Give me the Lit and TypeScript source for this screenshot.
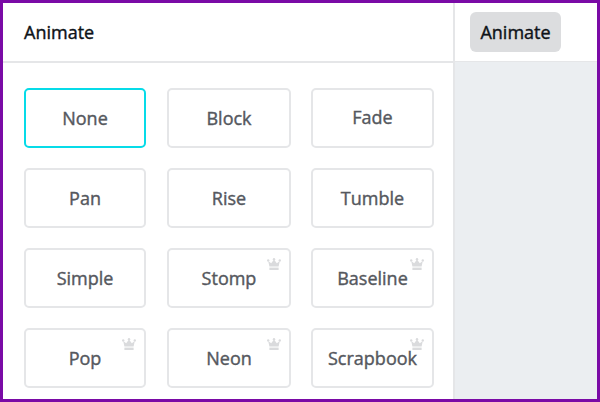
import { LitElement, html, css, svg } from "lit";
import { customElement } from "lit/decorators.js";

const items: [string, boolean, boolean, boolean][] = [
  ["None", false, true, false],
  ["Block", false, false, false],
  ["Fade", false, false, true],
  ["Pan", false, false, false],
  ["Rise", false, false, false],
  ["Tumble", false, false, false],
  ["Simple", false, false, false],
  ["Stomp", true, false, false],
  ["Baseline", true, false, false],
  ["Pop", true, false, false],
  ["Neon", true, false, false],
  ["Scrapbook", true, false, false],
];

const crown = svg`<svg class="crown" viewBox="0 0 14 12" width="14" height="12" aria-hidden="true">
  <circle cx="1.2" cy="2.4" r="1.2"/><circle cx="7" cy="1.2" r="1.2"/><circle cx="12.8" cy="2.4" r="1.2"/>
  <path d="M1.2 3 L4.2 5.2 L7 1.6 L9.8 5.2 L12.8 3 L11.6 8.4 H2.4 Z"/>
  <rect x="2.4" y="9.6" width="9.2" height="2.4"/>
</svg>`;

@customElement("app-root")
export class AppRoot extends LitElement {
  static styles = css`
    :host {
      display: block;
      width: 600px;
      height: 402px;
      box-sizing: border-box;
      border: 3px solid #7a0aa6;
      background: #fff;
      font-family: "Open Sans", sans-serif;
      overflow: hidden;
    }
    .frame {
      display: grid;
      grid-template-columns: 450px 1fr;
      grid-template-rows: 59px 1fr;
      height: 100%;
    }
    .head {
      display: flex;
      align-items: center;
      border-bottom: 2px solid #e5e6e8;
      box-sizing: border-box;
      height: 60px;
    }
    .title {
      padding-left: 21px;
      font-size: 18px;
      font-weight: 500;
      -webkit-text-stroke: 0.4px currentColor;
      color: #0e1318;
      padding-bottom: 1px;
    }
    .tab-head {
      border-left: 2px solid #e5e6e8;
      padding-left: 15px;
    }
    .tab {
      display: flex;
      align-items: center;
      justify-content: center;
      width: 91px;
      height: 40px;
      border-radius: 6px;
      background: #dcdddf;
      font-size: 18px;
      font-weight: 500;
      -webkit-text-stroke: 0.4px currentColor;
      color: #0e1318;
      margin-top: -1px;
    }
    .list {
      display: grid;
      grid-template-columns: 122px 124px 123px;
      grid-auto-rows: 60px;
      gap: 20px 21px;
      padding: 26px 0 0 21px;
    }
    .card:nth-child(3n) {
      margin-left: -1px;
      margin-right: 1px;
      width: 123px;
    }
    .side {
      background: #ebeef1;
      border-left: 2px solid #e5e6e8;
    }
    .card {
      position: relative;
      display: flex;
      align-items: center;
      justify-content: center;
      box-sizing: border-box;
      border: 2px solid #e5e6e8;
      border-radius: 5px;
      font-size: 18px;
      font-weight: 500;
      -webkit-text-stroke: 0.4px currentColor;
      color: #55585e;
      background: #fff;
    }
    .card.on {
      border-color: #06dbe8;
    }
    .card.up {
      padding-bottom: 2px;
    }
    .crown {
      position: absolute;
      top: 8px;
      right: 8px;
      fill: #dadbdd;
    }
  `;

  render() {
    return html`<div class="frame">
      <div class="head"><span class="title">Animate</span></div>
      <div class="head tab-head"><span class="tab">Animate</span></div>
      <div class="list">
        ${items.map(
          ([name, pro, on, up]) =>
            html`<div class="card ${on ? "on" : ""} ${up ? "up" : ""}">${name}${pro ? crown : ""}</div>`
        )}
      </div>
      <div class="side"></div>
    </div>`;
  }
}
